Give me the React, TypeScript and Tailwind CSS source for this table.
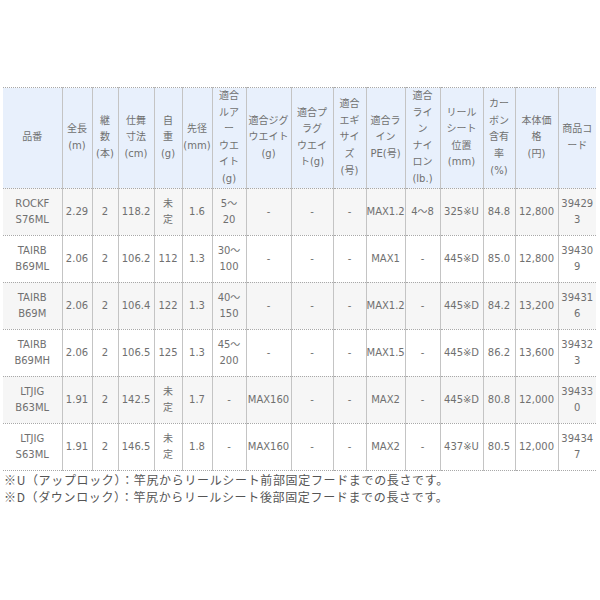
import React from 'react';

const widths = [59, 30, 26, 36, 28, 30, 34, 45, 42, 33, 39, 35, 43, 32, 43, 38];

const headers: string[][] = [
  ['品番'],
  ['全長', '(m)'],
  ['継', '数', '(本)'],
  ['仕舞', '寸法', '(cm)'],
  ['自', '重', '(g)'],
  ['先径', '(mm)'],
  ['適合', 'ルア', 'ー', 'ウエ', 'イト', '(g)'],
  ['適合ジグ', 'ウエイト', '(g)'],
  ['適合プ', 'ラグ', 'ウエイ', 'ト(g)'],
  ['適合', 'エギ', 'サイ', 'ズ', '(号)'],
  ['適合ラ', 'イン', 'PE(号)'],
  ['適合', 'ライ', 'ン', 'ナイ', 'ロン', '(lb.)'],
  ['リール', 'シート', '位置', '(mm)'],
  ['カー', 'ボン', '含有', '率', '(%)'],
  ['本体価', '格', '(円)'],
  ['商品コ', 'ード'],
];

const rows: string[][][] = [
  [['ROCKF', 'S76ML'], ['2.29'], ['2'], ['118.2'], ['未', '定'], ['1.6'], ['5～', '20'], ['-'], ['-'], ['-'], ['MAX1.2'], ['4～8'], ['325※U'], ['84.8'], ['12,800'], ['39429', '3']],
  [['TAIRB', 'B69ML'], ['2.06'], ['2'], ['106.2'], ['112'], ['1.3'], ['30～', '100'], ['-'], ['-'], ['-'], ['MAX1'], ['-'], ['445※D'], ['85.0'], ['12,800'], ['39430', '9']],
  [['TAIRB', 'B69M'], ['2.06'], ['2'], ['106.4'], ['122'], ['1.3'], ['40～', '150'], ['-'], ['-'], ['-'], ['MAX1.2'], ['-'], ['445※D'], ['84.2'], ['13,200'], ['39431', '6']],
  [['TAIRB', 'B69MH'], ['2.06'], ['2'], ['106.5'], ['125'], ['1.3'], ['45～', '200'], ['-'], ['-'], ['-'], ['MAX1.5'], ['-'], ['445※D'], ['86.2'], ['13,600'], ['39432', '3']],
  [['LTJIG', 'B63ML'], ['1.91'], ['2'], ['142.5'], ['未', '定'], ['1.7'], ['-'], ['MAX160'], ['-'], ['-'], ['MAX2'], ['-'], ['445※D'], ['80.8'], ['12,000'], ['39433', '0']],
  [['LTJIG', 'S63ML'], ['1.91'], ['2'], ['146.5'], ['未', '定'], ['1.8'], ['-'], ['MAX160'], ['-'], ['-'], ['MAX2'], ['-'], ['437※U'], ['80.5'], ['12,000'], ['39434', '7']],
];

function Lines({ lines }: { lines: string[] }) {
  return (
    <>
      {lines.map((l, i) => (
        <div key={i} className="whitespace-nowrap">{l}</div>
      ))}
    </>
  );
}

export default function App() {
  return (
    <div className="w-[600px] h-[600px] bg-white pt-[87px] pl-[3px] font-['DejaVu_Sans','Noto_Sans_CJK_JP',sans-serif] text-[#707070]">
      <table className="table-fixed border-collapse w-[593px] text-[10px]">
        <colgroup>
          {widths.map((w, i) => (
            <col key={i} style={{ width: w }} />
          ))}
        </colgroup>
        <thead>
          <tr className="bg-[#e8f0fc] border-t border-b border-dotted border-[#a8a8a8]">
            {headers.map((h, i) => (
              <th
                key={i}
                className={`h-[98px] p-0 font-normal text-center align-middle leading-[16.6px] ${i > 0 ? 'border-l border-solid border-l-[#c4c4c4]' : ''}`}
              >
                <Lines lines={h} />
              </th>
            ))}
          </tr>
        </thead>
        <tbody>
          {rows.map((r, ri) => (
            <tr
              key={ri}
              className={`border-b border-dotted border-[#a8a8a8] ${ri % 2 === 0 ? 'bg-[#f6f6f6]' : 'bg-white'}`}
            >
              {r.map((c, ci) => (
                <td
                  key={ci}
                  className={`h-[47px] p-0 text-center align-middle leading-[16px] ${ci > 0 ? 'border-l border-solid border-l-[#c4c4c4]' : ''}`}
                >
                  <Lines lines={c} />
                </td>
              ))}
            </tr>
          ))}
        </tbody>
      </table>
      <div className="pl-px text-[12px] leading-[17.5px] tracking-[0.65px] text-[#555] font-['Noto_Sans_CJK_JP',sans-serif]">
        <p>※U（アップロック）：竿尻からリールシート前部固定フードまでの長さです。</p>
        <p>※D（ダウンロック）：竿尻からリールシート後部固定フードまでの長さです。</p>
      </div>
    </div>
  );
}
